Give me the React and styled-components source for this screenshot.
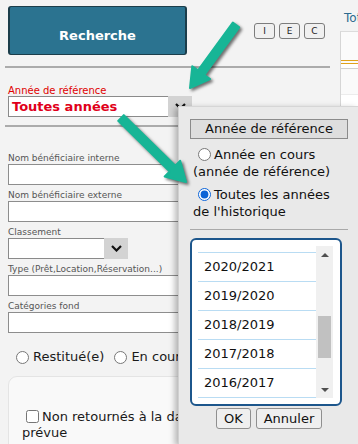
import React from "react";
import styled, { createGlobalStyle } from "styled-components";

const GlobalStyle = createGlobalStyle`
  html, body {
    margin: 0;
    padding: 0;
    background: #f3f3f3;
  }
  body {
    font-family: "DejaVu Sans", Verdana, sans-serif;
    color: #1a1a1a;
  }
`;

const Page = styled.div`
  position: relative;
  width: 358px;
  height: 444px;
  overflow: hidden;
  display: flex;
  align-items: flex-start;
  background: #f3f3f3;
`;

const Main = styled.div`
  width: 340px;
  flex-shrink: 0;
  box-sizing: border-box;
  padding: 6px 0 0 8px;
  display: flex;
  flex-direction: column;

  & > * {
    flex-shrink: 0;
  }
`;

const HeaderRow = styled.div`
  display: flex;
  align-items: flex-start;
`;

const SearchButton = styled.button`
  width: 179px;
  height: 49px;
  box-sizing: border-box;
  background: #2b7390;
  border: 1px solid #1b3d4a;
  border-left-width: 2px;
  border-right-width: 2px;
  border-radius: 3px;
  color: #fff;
  font-family: inherit;
  font-weight: bold;
  font-size: 13px;
  padding: 9px 0 0;
  cursor: pointer;
`;

const ToolGroup = styled.div`
  display: flex;
  gap: 4px;
  margin: 17px 0 0 67px;
`;

const ToolButton = styled.button`
  width: 21px;
  height: 16px;
  box-sizing: border-box;
  padding: 0;
  border: 1px solid #7c7c7c;
  border-radius: 3px;
  background: #f0f0f0;
  font-family: inherit;
  font-size: 9px;
  color: #222;
`;

const Rule = styled.div`
  margin: ${(p) => p.$top}px 0 0 -3px;
  width: ${(p) => p.$width}px;
  border-top: 2px solid #ababab;
`;

const RedLabel = styled.div`
  margin-top: 17px;
  font-size: 10px;
  line-height: 11px;
  color: #e00000;
`;

const SelectBox = styled.div`
  display: flex;
  width: ${(p) => p.$width}px;
  height: ${(p) => p.$height}px;
`;

const SelectField = styled.div`
  flex: 1;
  background: #fff;
  border: 1px solid #8a8a8a;
  border-right: none;
  box-sizing: border-box;
  padding-left: 3px;
  color: #e0001a;
  font-weight: bold;
  font-size: 13px;
  line-height: 20px;
`;

const SelectButton = styled.div`
  width: 24px;
  background: #d3d3d3;
  display: flex;
  align-items: center;
  justify-content: center;
`;

const FieldLabel = styled.div`
  margin-top: ${(p) => p.$top || 5}px;
  font-size: 9px;
  line-height: 11px;
  color: #555;
`;

const TextInput = styled.div`
  width: 250px;
  height: 21px;
  box-sizing: border-box;
  background: #fff;
  border: 1px solid #8d8d8d;
`;

const RadioRow = styled.div`
  display: flex;
  align-items: center;
  gap: 10px;
  margin-top: 16px;
  padding-left: 8px;
  font-size: 13px;
  line-height: 16px;
  white-space: nowrap;
`;

const RadioLabel = styled.label`
  display: flex;
  align-items: center;

  input {
    margin: 0 4px 0 0;
    width: 13px;
    height: 13px;
  }
`;

const Card = styled.div`
  margin-top: 11px;
  width: 330px;
  height: 120px;
  background: #f9f9f9;
  border: 1px solid #e4e4e4;
  border-radius: 9px 0 0 0;
  box-sizing: border-box;
  padding: 32px 0 0 13px;
`;

const CheckText = styled.div`
  width: 198px;
  font-size: 13px;
  line-height: 16px;

  input {
    margin: 0 3px 0 4px;
    width: 13px;
    height: 13px;
    vertical-align: -2px;
  }
`;

const Side = styled.div`
  flex: 1;
  overflow: hidden;
  padding-top: 11px;
`;

const SideTitle = styled.div`
  padding-left: 4px;
  font-size: 12px;
  line-height: 14px;
  color: #2d6a8e;
  white-space: nowrap;
`;

const SideTable = styled.div`
  margin-top: 6px;
  height: 80px;
  background: #fff;
  border-top: 1px solid #dcdcdc;
  border-left: 1px solid #d6d6d6;
`;

const SideHead = styled.div`
  height: 28px;
  background: #fbfbfb;
  border-bottom: 4px double #e0a21c;
`;

const SideRow = styled.div`
  margin-top: 4px;
  height: 25px;
  border-top: 1px solid #d0d0d0;
  border-bottom: 1px solid #ececec;
  background: #fafafa;
`;

/* dropdown panel opened over the form */
const Popup = styled.div`
  position: absolute;
  left: 178px;
  top: 106px;
  right: 0;
  bottom: 0;
  box-sizing: border-box;
  padding: 12px 10px 0 11px;
  background: #e9e9e9;
  border-left: 1px solid #d0d0d0;
  border-top: 1px solid #d6d6d6;
  box-shadow: -3px 2px 6px rgba(0, 0, 0, 0.28);
  font-size: 13px;
  color: #111;
`;

const PopTitle = styled.div`
  height: 20px;
  box-sizing: border-box;
  border: 1px solid #8b8b8b;
  background: #dedede;
  text-align: center;
  line-height: 18px;
`;

const Option = styled.label`
  display: block;
  width: 152px;
  margin-top: ${(p) => p.$top}px;
  padding-left: 3px;
  line-height: 17px;

  input {
    margin: 0 3px 0 5px;
    width: 13px;
    height: 13px;
    vertical-align: -2px;
    accent-color: #0b63d6;
  }
`;

const Separator = styled.div`
  margin-top: 9px;
  width: 158px;
  border-top: 1px solid #a9a9a9;
`;

const ListBox = styled.div`
  margin-top: 8px;
  width: 152px;
  height: 168px;
  box-sizing: border-box;
  padding: 6px 7px 6px 6px;
  display: flex;
  background: #fff;
  border: 2px solid #1c568c;
  border-radius: 6px;
`;

const Viewport = styled.div`
  flex: 1;
  overflow: hidden;
`;

const ItemList = styled.div`
  margin-top: -196px;
`;

const Item = styled.div`
  height: 29px;
  box-sizing: border-box;
  padding-left: 6px;
  border-bottom: 1px solid #b9dcf3;
  line-height: 28px;
  font-size: 13px;
  color: #111;
`;

const Scrollbar = styled.div`
  width: 17px;
  background: #f0f0f0;
  display: flex;
  flex-direction: column;
`;

const ScrollArrow = styled.div`
  height: 17px;
  display: flex;
  align-items: center;
  justify-content: center;

  &::before {
    content: "";
    border-left: 4px solid transparent;
    border-right: 4px solid transparent;
    ${(p) =>
      p.$down
        ? "border-top: 4px solid #505050;"
        : "border-bottom: 4px solid #505050;"}
  }
`;

const Track = styled.div`
  flex: 1;
`;

const Thumb = styled.div`
  margin: 53px 0 0 2px;
  width: 13px;
  height: 42px;
  background: #c1c1c1;
`;

const ButtonRow = styled.div`
  display: flex;
  justify-content: center;
  gap: 5px;
  margin-top: 2px;
`;

const DialogButton = styled.button`
  width: ${(p) => p.$width}px;
  height: 21px;
  box-sizing: border-box;
  padding: 0;
  border: 1px solid #8f8f8f;
  border-radius: 3px;
  background: #efefef;
  font-family: inherit;
  font-size: 13px;
  color: #111;
`;

const Overlay = styled.svg`
  position: absolute;
  left: 0;
  top: 0;
  pointer-events: none;
  filter: drop-shadow(2px 2px 1.5px rgba(0, 0, 0, 0.55));
`;

const Chevron = () => (
  <svg width="11" height="7" viewBox="0 0 11 7">
    <polyline
      points="1,1 5.5,5.5 10,1"
      fill="none"
      stroke="#111"
      strokeWidth="2.2"
    />
  </svg>
);

function arrowPoints(x1, y1, x2, y2) {
  const shaft = 4;
  const head = 11;
  const headLen = 19;
  const len = Math.hypot(x2 - x1, y2 - y1);
  const ux = (x2 - x1) / len;
  const uy = (y2 - y1) / len;
  const px = -uy;
  const py = ux;
  const bx = x2 - ux * headLen;
  const by = y2 - uy * headLen;
  const pts = [
    [x1 + px * shaft, y1 + py * shaft],
    [bx + px * shaft, by + py * shaft],
    [bx + px * head, by + py * head],
    [x2, y2],
    [bx - px * head, by - py * head],
    [bx - px * shaft, by - py * shaft],
    [x1 - px * shaft, y1 - py * shaft],
  ];
  return pts.map((p) => p[0].toFixed(1) + "," + p[1].toFixed(1)).join(" ");
}

const years = [
  "2027/2028",
  "2026/2027",
  "2025/2026",
  "2024/2025",
  "2023/2024",
  "2022/2023",
  "2021/2022",
  "2020/2021",
  "2019/2020",
  "2018/2019",
  "2017/2018",
  "2016/2017",
  "2015/2016",
];

export default function App() {
  return (
    <Page>
      <GlobalStyle />
      <Main>
        <HeaderRow>
          <SearchButton>Recherche</SearchButton>
          <ToolGroup>
            <ToolButton>I</ToolButton>
            <ToolButton>E</ToolButton>
            <ToolButton>C</ToolButton>
          </ToolGroup>
        </HeaderRow>
        <Rule $top={11} $width={325} />

        <RedLabel>Année de référence</RedLabel>
        <SelectBox $width={184} $height={21}>
          <SelectField>Toutes années</SelectField>
          <SelectButton>
            <Chevron />
          </SelectButton>
        </SelectBox>
        <Rule $top={8} $width={325} />

        <FieldLabel $top={26}>Nom bénéficiaire interne</FieldLabel>
        <TextInput />
        <FieldLabel>Nom bénéficiaire externe</FieldLabel>
        <TextInput />
        <FieldLabel>Classement</FieldLabel>
        <SelectBox $width={120} $height={21}>
          <SelectField />
          <SelectButton>
            <Chevron />
          </SelectButton>
        </SelectBox>
        <FieldLabel>Type (Prêt,Location,Réservation...)</FieldLabel>
        <TextInput />
        <FieldLabel>Catégories fond</FieldLabel>
        <TextInput />

        <RadioRow>
          <RadioLabel>
            <input type="radio" name="etat" />
            Restitué(e)
          </RadioLabel>
          <RadioLabel>
            <input type="radio" name="etat" />
            En cours
          </RadioLabel>
        </RadioRow>

        <Card>
          <CheckText>
            <input type="checkbox" />
            Non retournés à la date prévue
          </CheckText>
        </Card>
      </Main>

      <Side>
        <SideTitle>Total</SideTitle>
        <SideTable>
          <SideHead />
          <SideRow />
        </SideTable>
      </Side>

      <Popup>
        <PopTitle>Année de référence</PopTitle>
        <Option $top={7}>
          <input type="radio" name="annee" />
          Année en cours (année de référence)
        </Option>
        <Option $top={6}>
          <input type="radio" name="annee" defaultChecked />
          Toutes les années de l'historique
        </Option>
        <Separator />
        <ListBox>
          <Viewport>
            <ItemList>
              {years.map((y) => (
                <Item key={y}>{y}</Item>
              ))}
            </ItemList>
          </Viewport>
          <Scrollbar>
            <ScrollArrow />
            <Track>
              <Thumb />
            </Track>
            <ScrollArrow $down />
          </Scrollbar>
        </ListBox>
        <ButtonRow>
          <DialogButton $width={35}>OK</DialogButton>
          <DialogButton $width={66}>Annuler</DialogButton>
        </ButtonRow>
      </Popup>

      <Overlay width="358" height="444" viewBox="0 0 358 444">
        <polygon
          points={arrowPoints(236, 25, 190, 88)}
          fill="#17b596"
          stroke="#17b596"
          strokeWidth="2"
          strokeLinejoin="round"
        />
        <polygon
          points={arrowPoints(121, 118, 186, 182)}
          fill="#17b596"
          stroke="#17b596"
          strokeWidth="2"
          strokeLinejoin="round"
        />
      </Overlay>
    </Page>
  );
}
